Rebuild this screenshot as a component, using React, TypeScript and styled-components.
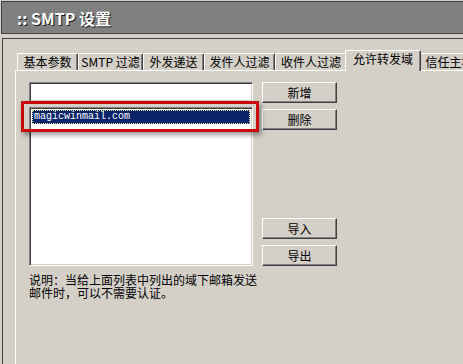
import React from "react";
import styled, { createGlobalStyle } from "styled-components";

const GlobalStyle = createGlobalStyle`
  html, body { margin: 0; padding: 0; background: #d4d0c8; overflow: hidden; }
  * { box-sizing: border-box; }
`;

const CJK = `"Noto Sans CJK SC", "Noto Sans", sans-serif`;

const Frame = styled.div`
  width: 463px;
  height: 364px;
  overflow: hidden;
  background: #d4d0c8;
  padding: 1px 0 0 1px;
  display: flex;
  flex-direction: column;
  font-family: ${CJK};
  font-size: 12px;
  color: #000;
`;

const TitleBar = styled.div`
  flex: 0 0 33px;
  background: #808080;
  border: 1px solid #404040;
  border-right: none;
  display: flex;
  align-items: center;
  padding: 1px 0 0 15px;
`;

const Title = styled.h1`
  margin: 0;
  font-family: ${CJK};
  font-size: 16px;
  font-weight: bold;
  line-height: 18px;
  color: #fff;
  text-shadow: 1px 1px 0 #1a1a1a;
  white-space: pre;
`;

const Panel = styled.div`
  flex: 1;
  margin: 4px 0 0 1px;
  border-top: 1px solid #404040;
  border-left: 1px solid #404040;
  padding: 11px 0 0 12px;
  display: flex;
  flex-direction: column;
`;

const TabRow = styled.div`
  display: flex;
  align-items: flex-end;
  height: 20px;
  padding-left: 2px;
  flex-shrink: 0;
`;

const Tab = styled.div<{ $w: number; $active?: boolean }>`
  position: relative;
  flex: 0 0 ${(p) => p.$w}px;
  height: ${(p) => (p.$active ? 21 : 17)}px;
  margin: 0 ${(p) => (p.$active ? -2 : 0)}px ${(p) => (p.$active ? -1 : 0)}px;
  z-index: ${(p) => (p.$active ? 2 : 1)};
  background: #d4d0c8;
  border-top: 1px solid #fff;
  border-left: 1px solid #fff;
  border-right: 1px solid #404040;
  box-shadow: inset -1px 0 0 #808080;
  border-radius: 2px 2px 0 0;
  text-align: center;
  line-height: 14px;
  padding-top: 1px;
  white-space: nowrap;
`;

const TabPanel = styled.div`
  flex: 1;
  border-top: 1px solid #fff;
  border-left: 1px solid #fff;
  padding: 11px 0 0 13px;
`;

const Body = styled.div`
  display: flex;
  gap: 9px;
`;

const LeftCol = styled.div`
  position: relative;
  width: 224px;
  display: flex;
  flex-direction: column;
  gap: 5px;
`;

const Sunken = styled.div<{ $h: number }>`
  height: ${(p) => p.$h}px;
  background: #fff;
  border-top: 1px solid #808080;
  border-left: 1px solid #808080;
  border-right: 1px solid #fff;
  border-bottom: 1px solid #fff;
  box-shadow: inset 1px 1px 0 #404040, inset -1px -1px 0 #d4d0c8;
  padding: 2px;
`;

const Item = styled.div<{ $selected?: boolean }>`
  height: 14px;
  background: ${(p) => (p.$selected ? "#0a246a" : "transparent")};
  color: ${(p) => (p.$selected ? "#fff" : "#000")};
  border: 1px dotted ${(p) => (p.$selected ? "#e8e8a0" : "transparent")};
  font-family: "Liberation Mono", monospace;
  font-size: 10px;
  line-height: 12px;
  padding-left: 1px;
`;

const Highlight = styled.div`
  position: absolute;
  left: -8px;
  top: 19px;
  width: 238px;
  height: 31px;
  border: 3px solid #c8090c;
  box-shadow: 2px 3px 5px rgba(0, 0, 0, 0.4);
  pointer-events: none;
`;

const RightCol = styled.div`
  display: flex;
  flex-direction: column;
  justify-content: space-between;
`;

const ButtonGroup = styled.div`
  display: flex;
  flex-direction: column;
  gap: 6px;
`;

const Button = styled.button`
  width: 75px;
  height: 21px;
  padding: 0;
  background: #d4d0c8;
  border-top: 1px solid #fff;
  border-left: 1px solid #fff;
  border-right: 1px solid #404040;
  border-bottom: 1px solid #404040;
  box-shadow: inset -1px -1px 0 #808080;
  font-family: ${CJK};
  font-size: 12px;
  line-height: 14px;
  color: #000;
`;

const Note = styled.p`
  margin: 7px 0 0;
  width: 232px;
  font-size: 12px;
`;

const NoteLine = styled.span`
  display: block;
  height: 13px;
  line-height: 13px;
`;

const tabs: { label: string; w: number; active?: boolean }[] = [
  { label: "基本参数", w: 61 },
  { label: "SMTP 过滤", w: 65 },
  { label: "外发递送", w: 61 },
  { label: "发件人过滤", w: 71 },
  { label: "收件人过滤", w: 72 },
  { label: "允许转发域", w: 76, active: true },
  { label: "信任主机", w: 61 },
];

export default function App() {
  return (
    <>
      <GlobalStyle />
      <Frame>
        <TitleBar>
          <Title>{":: SMTP 设置"}</Title>
        </TitleBar>
        <Panel>
          <TabRow>
            {tabs.map((t) => (
              <Tab key={t.label} $w={t.w} $active={t.active}>
                {t.label}
              </Tab>
            ))}
          </TabRow>
          <TabPanel>
            <Body>
              <LeftCol>
                <Sunken $h={20} />
                <Sunken $h={159}>
                  <Item $selected>magicwinmail.com</Item>
                </Sunken>
                <Highlight />
              </LeftCol>
              <RightCol>
                <ButtonGroup>
                  <Button>新增</Button>
                  <Button>删除</Button>
                </ButtonGroup>
                <ButtonGroup>
                  <Button>导入</Button>
                  <Button>导出</Button>
                </ButtonGroup>
              </RightCol>
            </Body>
            <Note>
              <NoteLine>说明：当给上面列表中列出的域下邮箱发送</NoteLine>
              <NoteLine>邮件时，可以不需要认证。</NoteLine>
            </Note>
          </TabPanel>
        </Panel>
      </Frame>
    </>
  );
}
